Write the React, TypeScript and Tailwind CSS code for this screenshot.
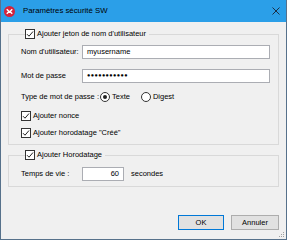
import React from 'react';

function Check({ checked = true }: { checked?: boolean }) {
  return (
    <span className="w-[10px] h-[10px] border border-[#333] bg-white flex items-center justify-center shrink-0">
      {checked && (
        <svg width="8" height="8" viewBox="0 0 8 8">
          <path d="M1 4.2 L3 6.2 L7 1.5" fill="none" stroke="#222" strokeWidth="1" />
        </svg>
      )}
    </span>
  );
}

function Radio({ checked }: { checked?: boolean }) {
  return (
    <span className="w-[10px] h-[10px] rounded-full border border-[#333] bg-white flex items-center justify-center shrink-0">
      {checked && <span className="w-[4px] h-[4px] rounded-full bg-[#222]" />}
    </span>
  );
}

function Field({ value, className }: { value: string; className?: string }) {
  return (
    <div className={'h-[14px] bg-white border border-[#abadb3] flex items-center px-[4px] ' + (className ?? '')}>
      {value}
    </div>
  );
}

export default function App() {
  return (
    <div
      className="w-[287px] h-[240px] bg-[#f0f0f0] border-x border-b border-[#56718b] flex flex-col text-[7.5px] text-black leading-none"
      style={{ fontFamily: '"Liberation Sans", Arial, sans-serif' }}
    >
      {/* Title bar */}
      <div className="h-[22px] bg-[#2b9fe8] flex items-center pl-[3px] pr-[6px] shrink-0">
        <svg width="11" height="11" viewBox="0 0 12 12">
          <circle cx="6" cy="6" r="6" fill="#d4233a" />
          <path d="M3 3.5 L5.5 6 L3 8.5 M9 3.5 L6.5 6 L9 8.5" fill="none" stroke="#fff" strokeWidth="1.6" />
        </svg>
        <span className="ml-[8px] text-[7.8px]">Paramètres sécurité SW</span>
        <svg className="ml-auto" width="8" height="8" viewBox="0 0 8 8">
          <path d="M0.5 0.5 L7.5 7.5 M7.5 0.5 L0.5 7.5" stroke="#1c2f45" strokeWidth="1" />
        </svg>
      </div>

      <div className="flex-1 flex flex-col px-[7px] pt-[6px] relative">
        {/* Group 1 */}
        <fieldset className="border border-[#d9d9d9] pb-[6px] pl-[12px] pr-[8px]">
          <legend className="ml-[4px] pr-[3px] flex items-center gap-[2px] h-[12px]">
            <Check />
            <span>Ajouter jeton de nom d'utilisateur</span>
          </legend>
          <div className="flex items-center mt-[5px]">
            <span className="w-[61px] shrink-0">Nom d'utilisateur:</span>
            <Field value="myusername" className="flex-1" />
          </div>
          <div className="flex items-center mt-[10px]">
            <span className="w-[61px] shrink-0">Mot de passe</span>
            <Field value="●●●●●●●●●●●" className="flex-1 tracking-[0.4px] text-[5.5px]" />
          </div>
          <div className="flex items-center mt-[9px] h-[10px]">
            <span className="w-[79px] shrink-0">Type de mot de passe :</span>
            <Radio checked />
            <span className="ml-[2px]">Texte</span>
            <span className="ml-[11px]"><Radio /></span>
            <span className="ml-[2px]">Digest</span>
          </div>
          <div className="flex items-center gap-[2px] mt-[9px] h-[10px]">
            <Check />
            <span>Ajouter nonce</span>
          </div>
          <div className="flex items-center gap-[2px] mt-[7px] h-[10px]">
            <Check />
            <span>Ajouter horodatage "Créé"</span>
          </div>
        </fieldset>

        {/* Group 2 */}
        <fieldset className="border border-[#d9d9d9] mt-[4px] pb-[5px] pl-[12px] pr-[8px]">
          <legend className="ml-[4px] pr-[3px] flex items-center gap-[2px] h-[12px]">
            <Check />
            <span>Ajouter Horodatage</span>
          </legend>
          <div className="flex items-center mt-[6px]">
            <span className="w-[61px] shrink-0">Temps de vie :</span>
            <Field value="60" className="w-[42px] justify-end" />
            <span className="ml-[7px]">secondes</span>
          </div>
        </fieldset>

        {/* Buttons */}
        <div className="mt-auto mb-[9px] flex justify-end gap-[7px] items-end">
          <button className="w-[46px] h-[15px] bg-[#e1e1e1] border border-[#0078d7] text-center">OK</button>
          <button className="w-[48px] h-[15px] bg-[#e1e1e1] border border-[#adadad] text-center">Annuler</button>
        </div>

        {/* Resize grip */}
        <svg className="absolute right-[1px] bottom-[1px]" width="7" height="7" viewBox="0 0 7 7">
          <g fill="#a0a0a0">
            <rect x="5" y="1" width="1" height="1" />
            <rect x="3" y="3" width="1" height="1" />
            <rect x="5" y="3" width="1" height="1" />
            <rect x="1" y="5" width="1" height="1" />
            <rect x="3" y="5" width="1" height="1" />
            <rect x="5" y="5" width="1" height="1" />
          </g>
        </svg>
      </div>
    </div>
  );
}
